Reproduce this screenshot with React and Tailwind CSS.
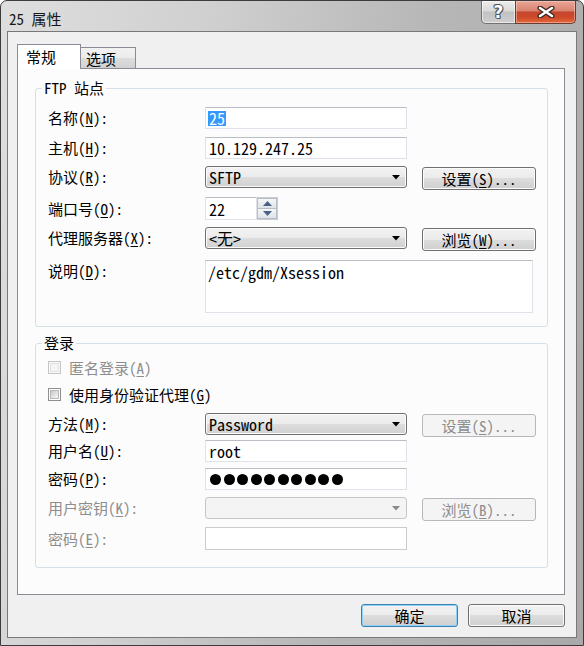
import React from 'react';

const UI = "font-['Noto_Sans_Mono_CJK_SC','Noto_Sans_CJK_SC',sans-serif]";
const MONO = "font-['Noto_Sans_Mono_CJK_SC','Liberation_Mono',monospace]";

const K = ({ children }) => (
  <span className="underline underline-offset-[2px] decoration-1">{children}</span>
);

const Label = ({ pre, k, post = '):', disabled, w = 'w-[157px]' }) => (
  <div className={`${w} shrink-0 text-[15px] leading-[22px] ${disabled ? 'text-[#8d8d8d]' : 'text-black'}`}>
    {pre}<K>{k}</K>{post}
  </div>
);

const TextBox = ({ children, disabled, w = 'w-[202px]', h = 'h-[22px]' }) => (
  <div
    className={`${w} ${h} shrink-0 flex items-center pl-[2px] bg-white border ${
      disabled ? 'border-[#c9ccd1]' : 'border-[#dfe3e9] border-t-[#b9bdc4]'
    } ${MONO} text-[16px] leading-none text-black`}
  >
    {children}
  </div>
);

const Arrow = ({ color = '#000' }) => (
  <svg width="8" height="5" viewBox="0 0 8 5" className="ml-auto mr-[6px] shrink-0">
    <path d="M0 0h8L4 4.5z" fill={color} />
  </svg>
);

const Combo = ({ value, disabled }) => (
  <div
    className={`w-[202px] h-[22px] shrink-0 rounded-[3px] border flex items-center pl-[3px] ${MONO} text-[16px] leading-none ${
      disabled
        ? 'border-[#c3c7cc] bg-[#f4f4f4]'
        : 'border-[#707070] bg-[linear-gradient(#f3f3f3_0%,#ebebeb_50%,#dddddd_50%,#d1d1d1_100%)] shadow-[inset_0_0_0_1px_#fbfbfb]'
    }`}
  >
    <span>{value}</span>
    <Arrow color={disabled ? '#8a8a8a' : '#000'} />
  </div>
);

const Btn = ({ children, disabled, def, w = 'w-[114px]', h = 'h-[23px]', cls = '' }) => (
  <div
    className={`${w} ${h} ${cls} shrink-0 rounded-[3px] border flex items-center justify-center text-[15px] leading-none ${
      disabled
        ? 'border-[#b5b9bd] bg-[#f4f4f4] text-[#8d8d8d]'
        : def
        ? 'border-[#3c7fb1] bg-[linear-gradient(#f2f2f2_0%,#ebebeb_50%,#dddddd_50%,#cfcfcf_100%)] shadow-[inset_0_0_0_1px_#8fd3f4] text-black'
        : 'border-[#707070] bg-[linear-gradient(#f2f2f2_0%,#ebebeb_50%,#dddddd_50%,#cfcfcf_100%)] shadow-[inset_0_0_0_1px_#fbfbfb] text-black'
    }`}
  >
    {children}
  </div>
);

const Check = ({ disabled }) => (
  <span
    className={`w-[13px] h-[13px] shrink-0 border flex items-center justify-center ${
      disabled ? 'border-[#c5c5c5] bg-[#f7f7f7]' : 'border-[#8e8f8f] bg-white'
    }`}
  >
    <span
      className={`w-[9px] h-[9px] border ${
        disabled
          ? 'border-[#e3e3e3] bg-[#f4f4f4]'
          : 'border-[#b9b9b9] bg-[linear-gradient(135deg,#c9c9c9,#f7f7f7)]'
      }`}
    />
  </span>
);

const Group = ({ title, h, mt, children }) => (
  <div className={`relative ${mt} ml-[17px] w-[513px] ${h} border border-[#d5dfe5] rounded-[3px]`}>
    <span className="absolute -top-[10px] left-[6px] px-[2px] bg-[#fcfcfc] text-[15px] leading-[18px] text-black">
      {title}
    </span>
    {children}
  </div>
);

export default function App() {
  return (
    <div className={`${UI} font-light w-[584px] h-[646px] bg-white`}>
      <div className="w-[584px] h-[646px] flex flex-col border border-[#3c3c3c] rounded-t-[7px] overflow-hidden bg-[linear-gradient(100deg,#dedede_0%,#d0d0d0_30%,#b7b7b7_62%,#a9a9a9_100%)]">
        {/* title bar */}
        <div className="h-[30px] shrink-0 flex items-start">
          <div className="pl-[8px] pt-[9px] text-[15px] font-normal leading-[18px] text-[#161616]">25 属性</div>
          <div className="ml-auto mr-[7px] flex">
            <div className="w-[35px] h-[23px] border border-t-0 border-[#707070] rounded-bl-[5px] flex items-center justify-center bg-[linear-gradient(#ededed_0%,#dadada_45%,#c2c2c2_50%,#cecece_100%)] shadow-[inset_0_0_0_1px_rgba(255,255,255,0.55)]">
              <span className="font-['DejaVu_Sans',sans-serif] font-bold text-[17px] leading-none text-white [text-shadow:1px_0_#555,-1px_0_#555,0_1px_#555,0_-1px_#555,1px_1px_#555,-1px_-1px_#555]">
                ?
              </span>
            </div>
            <div className="-ml-px w-[61px] h-[23px] border border-t-0 border-[#6b3a31] rounded-br-[5px] flex items-center justify-center bg-[linear-gradient(#e9a796_0%,#d98470_45%,#c4452c_50%,#cf4a2b_75%,#e36a3d_100%)] shadow-[inset_0_0_0_1px_rgba(255,220,210,0.45)]">
              <svg width="18" height="12" viewBox="0 0 18 12">
                <path d="M3 2L15 10M15 2L3 10" stroke="#3b2420" strokeWidth="5" strokeLinecap="round" />
                <path d="M3 2L15 10M15 2L3 10" stroke="#ffffff" strokeWidth="2.6" strokeLinecap="round" />
              </svg>
            </div>
          </div>
        </div>

        {/* client area */}
        <div className="mx-[6px] h-[607px] shrink-0 border border-[#787878] bg-[#f0f0f0] pt-[12px] pl-[9px] pr-[11px]">
          {/* tabs */}
          <div className="h-[24px] flex items-end text-[15px] leading-none text-black">
            <div className="relative z-10 -mb-px w-[64px] h-[25px] border border-b-0 border-[#898c95] bg-white pl-[8px] pt-[4px]">
              常规
            </div>
            <div className="-ml-px w-[56px] h-[21px] border border-b-0 border-[#898c95] bg-[linear-gradient(#f2f2f2_0%,#ebebeb_50%,#dddddd_50%,#d2d2d2_100%)] pl-[5px] pt-[3px]">
              选项
            </div>
          </div>

          {/* tab page */}
          <div className="w-[548px] h-[527px] border border-[#898c95] bg-[#fcfcfc] pt-[19px]">
            <Group title="FTP 站点" h="h-[239px]" mt="mt-0">
              <div className="pl-[12px] pt-[18px]">
                <div className="h-[22px] flex items-center">
                  <Label pre="名称(" k="N" />
                  <TextBox>
                    <span className="bg-[#3399ff] text-white px-[1px] leading-[15px]">25</span>
                  </TextBox>
                </div>
                <div className="mt-[8px] h-[22px] flex items-center">
                  <Label pre="主机(" k="H" />
                  <TextBox>
                    <span className="pl-[1px]">10.129.247.25</span>
                  </TextBox>
                </div>
                <div className="mt-[7px] h-[24px] flex items-start">
                  <Label pre="协议(" k="R" />
                  <Combo value="SFTP" />
                  <Btn cls="ml-[15px] mt-[1px]">
                    设置(<K>S</K>)...
                  </Btn>
                </div>
                <div className="mt-[7px] h-[23px] flex items-center">
                  <Label pre="端口号(" k="O" />
                  <TextBox w="w-[52px]" h="h-[23px]">
                    <span className="pl-[1px]">22</span>
                  </TextBox>
                  <div className="w-[21px] h-[23px] flex flex-col border border-[#c9ccd1] border-l-0 bg-white">
                    <div className="h-[11px] border border-[#b8bec8] bg-[linear-gradient(#f6f6f6,#dfe3e9)] flex items-center justify-center">
                      <svg width="9" height="5" viewBox="0 0 9 5">
                        <path d="M0 5L4.5 0L9 5z" fill="#4a6188" />
                      </svg>
                    </div>
                    <div className="h-[11px] border border-t-0 border-[#b8bec8] bg-[linear-gradient(#f6f6f6,#dfe3e9)] flex items-center justify-center">
                      <svg width="9" height="5" viewBox="0 0 9 5">
                        <path d="M0 0L9 0L4.5 5z" fill="#4a6188" />
                      </svg>
                    </div>
                  </div>
                </div>
                <div className="mt-[7px] h-[24px] flex items-start">
                  <Label pre="代理服务器(" k="X" />
                  <Combo value="<无>" />
                  <Btn cls="ml-[15px] mt-[1px]">
                    浏览(<K>W</K>)...
                  </Btn>
                </div>
                <div className="mt-[9px] flex items-start">
                  <Label pre="说明(" k="D" />
                  <div className={`w-[328px] h-[53px] bg-white border border-[#dfe3e9] border-t-[#b9bdc4] pl-[2px] pt-[3px] ${MONO} text-[16px] leading-[17px] text-black`}>
                    /etc/gdm/Xsession
                  </div>
                </div>
              </div>
            </Group>

            <Group title="登录" h="h-[225px]" mt="mt-[16px]">
              <div className="pl-[12px] pt-[14px]">
                <div className="h-[18px] flex items-center gap-[8px] text-[15px] leading-none text-[#8d8d8d]">
                  <Check disabled />
                  <span>
                    匿名登录(<K>A</K>)
                  </span>
                </div>
                <div className="mt-[9px] h-[18px] flex items-center gap-[8px] text-[15px] leading-none text-black">
                  <Check />
                  <span>
                    使用身份验证代理(<K>G</K>)
                  </span>
                </div>
                <div className="mt-[10px] h-[24px] flex items-start">
                  <Label pre="方法(" k="M" />
                  <Combo value="Password" />
                  <Btn disabled cls="ml-[15px] mt-[1px]">
                    设置(<K>S</K>)...
                  </Btn>
                </div>
                <div className="mt-[3px] h-[22px] flex items-center">
                  <Label pre="用户名(" k="U" />
                  <TextBox>
                    <span className="pl-[1px]">root</span>
                  </TextBox>
                </div>
                <div className="mt-[6px] h-[22px] flex items-center">
                  <Label pre="密码(" k="P" />
                  <TextBox>
                    <div className="flex gap-[2.5px] pl-[2px]">
                      {Array.from({ length: 10 }).map((_, i) => (
                        <span key={i} className="w-[11px] h-[11px] rounded-full bg-black" />
                      ))}
                    </div>
                  </TextBox>
                </div>
                <div className="mt-[7px] h-[25px] flex items-start">
                  <Label pre="用户密钥(" k="K" disabled />
                  <Combo value="" disabled />
                  <Btn disabled cls="ml-[15px] mt-[1px]">
                    浏览(<K>B</K>)...
                  </Btn>
                </div>
                <div className="mt-[5px] h-[23px] flex items-center">
                  <Label pre="密码(" k="E" disabled />
                  <TextBox disabled h="h-[23px]" />
                </div>
              </div>
            </Group>
          </div>

          {/* dialog buttons */}
          <div className="mt-[9px] flex justify-end gap-[10px]">
            <Btn def w="w-[97px]">确定</Btn>
            <Btn w="w-[97px]">取消</Btn>
          </div>
        </div>
      </div>
    </div>
  );
}
